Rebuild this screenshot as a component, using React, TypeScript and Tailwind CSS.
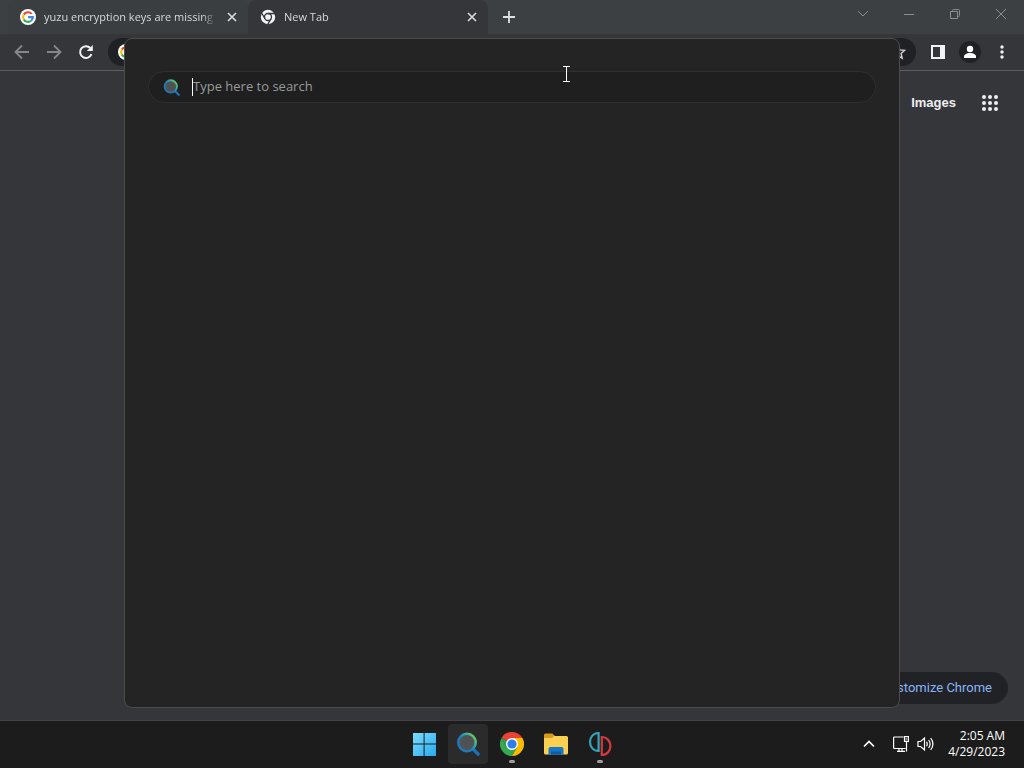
import { useState } from "react";
import type { ReactNode } from "react";

function GoogleLogo() {
  return (
    <svg viewBox="0 0 16 16" className="h-4 w-4 shrink-0">
      <circle cx="8" cy="8" r="8" fill="#fff" />
      <g fill="none" strokeWidth="2.1">
        <path d="M11.7 4.9A4.9 4.9 0 0 0 3.8 5.6" stroke="#ea4335" />
        <path d="M3.8 5.6a4.9 4.9 0 0 0 0 4.8" stroke="#fbbc05" />
        <path d="M3.8 10.4a4.9 4.9 0 0 0 7.4 1.3" stroke="#34a853" />
        <path d="M11.2 11.7A4.8 4.8 0 0 0 12.9 8.1H8.1" stroke="#4285f4" />
      </g>
    </svg>
  );
}

function ChromeMono() {
  return (
    <svg viewBox="0 0 16 16" className="h-4 w-4 shrink-0">
      <circle cx="8" cy="8" r="7.2" fill="#f1f3f4" />
      <g fill="none" stroke="#35363a" strokeWidth="1.3">
        <circle cx="8" cy="8" r="3.5" />
        <path d="M8 4.5h7M4.97 9.75 1.5 3.7M11.03 9.75 7.5 15.8" />
      </g>
    </svg>
  );
}

function ChromeLogo() {
  return (
    <svg viewBox="0 0 24 24" className="h-6 w-6">
      <path d="M12 12 1.6 6A12 12 0 0 1 22.4 6Z" fill="#ea4335" />
      <path d="M1.6 6 6.8 15 12 12Z" fill="#34a853" />
      <path d="M1.6 6A12 12 0 0 0 12 24l5.2-9H6.8Z" fill="#34a853" />
      <path d="M17.2 15 12 24A12 12 0 0 0 22.4 6H12Z" fill="#fbbc05" />
      <circle cx="12" cy="12" r="6" fill="#fff" />
      <circle cx="12" cy="12" r="4.6" fill="#2f7de9" />
    </svg>
  );
}

function SearchLogo({ id, className }: { id: string; className: string }) {
  return (
    <svg viewBox="0 0 24 24" className={className}>
      <defs>
        <linearGradient id={id} x1="0.15" y1="0.7" x2="0.85" y2="0.1">
          <stop offset="0.3" stopColor="#1f78b8" />
          <stop offset="0.65" stopColor="#2aa5b0" />
          <stop offset="1" stopColor="#62c66a" />
        </linearGradient>
      </defs>
      <path d="m16.5 16.5 5.7 5.700" stroke="#1b73b8" strokeWidth="3.2" strokeLinecap="round" />
      <circle cx="11" cy="10.500" r="8.700" fill="#505152" stroke={`url(#${id})`} strokeWidth="2.600" />
    </svg>
  );
}

function WindowsLogo() {
  return (
    <svg viewBox="0 0 24 24" className="h-6 w-6">
      <defs>
        <linearGradient id="win" x1="0" y1="0" x2="1" y2="1">
          <stop offset="0" stopColor="#7bdcff" />
          <stop offset="1" stopColor="#27a9f0" />
        </linearGradient>
      </defs>
      <path d="M1 1h10.6v10.6H1zM12.6 1H24v10.6H12.6zM1 12.6h10.6V24H1zM12.6 12.6H24V24H12.6z" fill="url(#win)" />
    </svg>
  );
}

function FolderLogo() {
  return (
    <svg viewBox="0 0 24 24" className="h-6 w-6">
      <path d="M0 3a1.5 1.5 0 0 1 1.5-1.5h6.8L11 4v4H0z" fill="#d89b1d" />
      <path d="M0 6h8l2.5-2H22.5A1.5 1.5 0 0 1 24 5.5V21a1.5 1.5 0 0 1-1.5 1.5h-21A1.5 1.5 0 0 1 0 21z" fill="#f9d050" />
      <path d="M4.5 22.5V17a2 2 0 0 1 2-2h11a2 2 0 0 1 2 2v5.5z" fill="#1678cc" />
      <path d="M7 19.5h10v3H7z" fill="#125a9f" />
    </svg>
  );
}

function YuzuLogo() {
  return (
    <svg viewBox="0 0 24 24" className="h-6 w-6" fill="none" strokeWidth="2.2">
      <path d="M10.6 1v18C5.4 19 2 15 2 10s3.400-9 8.600-9Z" stroke="#32a5b8" />
      <path d="M13.8 5v18c5 0 8.600-4 8.600-9s-3.600-9-8.600-9Z" stroke="#d6383d" />
    </svg>
  );
}

function CloseIcon() {
  return (
    <svg viewBox="0 0 10 10" className="h-[10px] w-[10px]" stroke="currentColor" strokeWidth="1.6">
      <path d="m1 1 8 8M9 1 1 9" />
    </svg>
  );
}

function Tab({ icon, title, active }: { icon: ReactNode; title: string; active?: boolean }) {
  return (
    <div
      className={`flex min-w-0 flex-[0_1_240px] items-center gap-2 rounded-t-lg pr-2 pl-3 ${
        active ? "bg-[#35363a]" : "bg-[#3a3e41]"
      }`}
    >
      {icon}
      <span className="flex-1 overflow-hidden whitespace-nowrap text-[11px] text-[#d6d8da] [mask-image:linear-gradient(to_right,black_92%,transparent)]">
        {title}
      </span>
      <button aria-label={`Close ${title}`} className="p-[3px] text-[#dcdee0]">
        <CloseIcon />
      </button>
    </div>
  );
}

function TabStrip() {
  return (
    <div className="flex h-[34px] shrink-0 bg-[#3c4043]">
      <div className="flex min-w-0 flex-1 pl-2">
        <Tab icon={<GoogleLogo />} title="yuzu encryption keys are missing" />
        <Tab icon={<ChromeMono />} title="New Tab" active />
        <button aria-label="New tab" className="px-[15px] text-[#dee1e3]">
          <svg viewBox="0 0 12 12" className="h-3 w-3" stroke="currentColor" strokeWidth="1.8">
            <path d="M6 0v12M0 6h12" />
          </svg>
        </button>
      </div>
      <div className="flex pb-[6px] text-[#8b8e90]">
        <button aria-label="Search tabs" className="flex w-[46px] items-center justify-center">
          <svg viewBox="0 0 12 12" className="h-3 w-3" fill="none" stroke="currentColor">
            <path d="m1 3 5 5 5-5" />
          </svg>
        </button>
        <button aria-label="Minimize" className="flex w-[46px] items-center justify-center">
          <svg viewBox="0 0 12 12" className="h-3 w-3" fill="none" stroke="currentColor">
            <path d="M1 6.5h10" />
          </svg>
        </button>
        <button aria-label="Restore" className="flex w-[46px] items-center justify-center">
          <svg viewBox="0 0 12 12" className="h-3 w-3" fill="none" stroke="currentColor">
            <path d="M1.5 3.5h7v7h-7zM3.5 3.5v-1a1 1 0 0 1 1-1h5a1 1 0 0 1 1 1v5a1 1 0 0 1-1 1h-1" />
          </svg>
        </button>
        <button aria-label="Close window" className="flex w-[46px] items-center justify-center">
          <svg viewBox="0 0 12 12" className="h-3 w-3" fill="none" stroke="currentColor">
            <path d="m1 1 10 10M11 1 1 11" />
          </svg>
        </button>
      </div>
    </div>
  );
}

function Toolbar() {
  return (
    <div className="flex h-[37px] shrink-0 items-center border-b border-[#5b5d60] bg-[#35363a] px-[6px] text-[#f1f3f4]">
      <button aria-label="Back" className="flex w-8 justify-center text-[#85878a]">
        <svg viewBox="0 0 16 16" className="h-4 w-4" fill="none" stroke="currentColor" strokeWidth="1.8">
          <path d="M15 8H2M8 1.5 1.5 8 8 14.5" />
        </svg>
      </button>
      <button aria-label="Forward" className="flex w-8 justify-center text-[#85878a]">
        <svg viewBox="0 0 16 16" className="h-4 w-4" fill="none" stroke="currentColor" strokeWidth="1.8">
          <path d="M1 8h13M8 1.5 14.5 8 8 14.5" />
        </svg>
      </button>
      <button aria-label="Reload" className="flex w-8 justify-center">
        <svg viewBox="0 0 16 16" className="h-4 w-4" fill="none" stroke="currentColor" strokeWidth="2">
          <path d="M13.5 10.2A5.9 5.9 0 1 1 12.3 4" />
          <path d="M14.8 1v6h-6z" fill="currentColor" stroke="none" />
        </svg>
      </button>
      <div className="mx-[6px] flex h-7 flex-1 items-center justify-between rounded-full bg-[#202124] px-[10px]">
        <GoogleLogo />
        <button aria-label="Bookmark this tab">
          <svg viewBox="0 0 16 16" className="h-4 w-4" fill="none" stroke="#d0d2d4" strokeWidth="1.4">
            <path d="m8 1.5 1.9 4.4 4.8.4-3.6 3.2 1.1 4.7L8 11.7l-4.2 2.5 1.1-4.7-3.6-3.2 4.8-.4z" />
          </svg>
        </button>
      </div>
      <button aria-label="Side panel" className="flex w-8 justify-center">
        <svg viewBox="0 0 14 14" className="h-[14px] w-[14px]">
          <path d="M0 0h14v14H0zM2 2v10h7V2z" fill="currentColor" fillRule="evenodd" />
        </svg>
      </button>
      <button aria-label="Profile" className="flex w-8 justify-center">
        <svg viewBox="0 0 22 22" className="h-[22px] w-[22px]">
          <circle cx="11" cy="11" r="11" fill="#202124" />
          <circle cx="11" cy="8" r="3.2" fill="#fff" />
          <path d="M5 17v-1.5c0-2 3-3.5 6-3.5s6 1.5 6 3.5V17z" fill="#fff" />
        </svg>
      </button>
      <button aria-label="Menu" className="flex w-8 justify-center">
        <svg viewBox="0 0 4 14" className="h-[14px] w-1" fill="currentColor">
          <circle cx="2" cy="2" r="1.7" />
          <circle cx="2" cy="7" r="1.7" />
          <circle cx="2" cy="12" r="1.7" />
        </svg>
      </button>
    </div>
  );
}

function NewTabPage() {
  return (
    <main className="flex min-h-0 flex-1 flex-col items-end justify-between bg-[#35363a] pb-4">
      <nav className="flex items-center gap-6 pt-5 pr-6 font-['Liberation_Sans',sans-serif] text-[13px] leading-6 font-bold text-[#eeeff0]">
        <a href="#images">Images</a>
        <button aria-label="Google apps" className="p-[2px]">
          <svg viewBox="0 0 16 16" className="h-4 w-4" fill="currentColor">
            {[2, 8, 14].map((y) =>
              [2, 8, 14].map((x) => <circle key={`${x}-${y}`} cx={x} cy={y} r="2" />)
            )}
          </svg>
        </button>
      </nav>
      <button className="mr-4 h-8 rounded-full bg-[#202226] pr-4 pl-8 font-[Roboto,sans-serif] text-[13px] text-[#8ab4f8]">
        Customize Chrome
      </button>
    </main>
  );
}

function SearchPanel() {
  const [query, setQuery] = useState("");

  return (
    <div className="absolute inset-x-0 top-[38px] bottom-[60px] flex justify-center">
      <section
        aria-label="Search"
        className="w-full max-w-[776px] rounded-lg border border-[#4b4c4e] bg-[#242424] px-[23px] pt-8"
      >
        <label className="flex h-8 items-center rounded-full border border-[#303030] bg-[#1f1f1f] px-[14px]">
          <SearchLogo id="search-box" className="h-[17px] w-[17px]" />
          <span className="ml-3 h-[18px] w-px bg-white" />
          <input
            type="text"
            aria-label="Search"
            value={query}
            onChange={(e) => setQuery(e.target.value)}
            placeholder="Type here to search"
            className="min-w-0 flex-1 bg-transparent text-[13px] text-white caret-transparent outline-none placeholder:text-[#9a9a9a]"
          />
        </label>
      </section>
      {/* text pointer */}
      <svg viewBox="0 0 7 16" className="absolute top-7 left-[55%] h-4 w-[7px]" fill="none" stroke="#fff">
        <path d="M0 .5h7M0 15.5h7M3.5 0v16" />
      </svg>
    </div>
  );
}

function TaskButton({ label, children, active, running }: { label: string; children: ReactNode; active?: boolean; running?: boolean }) {
  return (
    <button
      aria-label={label}
      className={`relative flex h-10 w-10 items-center justify-center rounded ${active ? "bg-[#2b2b2b]" : ""}`}
    >
      {children}
      {running && <span className="absolute bottom-px h-[3px] w-[6px] rounded-full bg-[#a0a0a0]" />}
    </button>
  );
}

function Taskbar() {
  return (
    <footer className="grid h-12 shrink-0 grid-cols-[1fr_auto_1fr] items-center border-t border-[#414345] bg-[#1c1c1c] pb-[2px] text-white">
      <div className="col-start-2 flex gap-1">
        <TaskButton label="Start"><WindowsLogo /></TaskButton>
        <TaskButton label="Search" active><SearchLogo id="search-task" className="h-6 w-6" /></TaskButton>
        <TaskButton label="Google Chrome" running><ChromeLogo /></TaskButton>
        <TaskButton label="File Explorer"><FolderLogo /></TaskButton>
        <TaskButton label="yuzu" running><YuzuLogo /></TaskButton>
      </div>
      <div className="flex items-center justify-end pr-[19px]">
        <button aria-label="Show hidden icons" className="mr-[18px]">
          <svg viewBox="0 0 12 12" className="h-3 w-3" fill="none" stroke="currentColor" strokeWidth="1.7">
            <path d="m1 8.5 5-5 5 5" />
          </svg>
        </button>
        <button aria-label="Network and volume" className="mr-[14px] flex gap-2">
          <svg viewBox="0 0 16 16" className="h-4 w-4" fill="none" stroke="currentColor" strokeWidth="1.2">
            <path d="M10.5 1H1.6A1 1 0 0 0 .6 2v9.5a1 1 0 0 0 1 1h11M4 15.4h8M6 12.5v2.9M9 12.5v2.9M11.5.6h4v4.8h-4zM13.5 5.4v10M12.5 3h2" />
          </svg>
          <svg viewBox="0 0 17 16" className="h-4 w-[17px]" fill="none" stroke="currentColor" strokeWidth="1.2">
            <path d="M1 5.5h2.6L7.5 2v12l-3.9-3.5H1zM9.5 5.8c1 1.4 1 3 0 4.4M11.6 4c1.9 2.5 1.9 5.5 0 8M13.7 2.2c2.8 3.6 2.8 8 0 11.6" />
          </svg>
        </button>
        <time dateTime="2023-04-29T02:05" className="text-right text-xs leading-4">
          2:05 AM
          <br />
          4/29/2023
        </time>
      </div>
    </footer>
  );
}

export default function App() {
  return (
    <div className="relative flex h-screen flex-col overflow-hidden font-['Open_Sans','Noto_Sans',sans-serif]">
      <TabStrip />
      <Toolbar />
      <NewTabPage />
      <Taskbar />
      <SearchPanel />
    </div>
  );
}
